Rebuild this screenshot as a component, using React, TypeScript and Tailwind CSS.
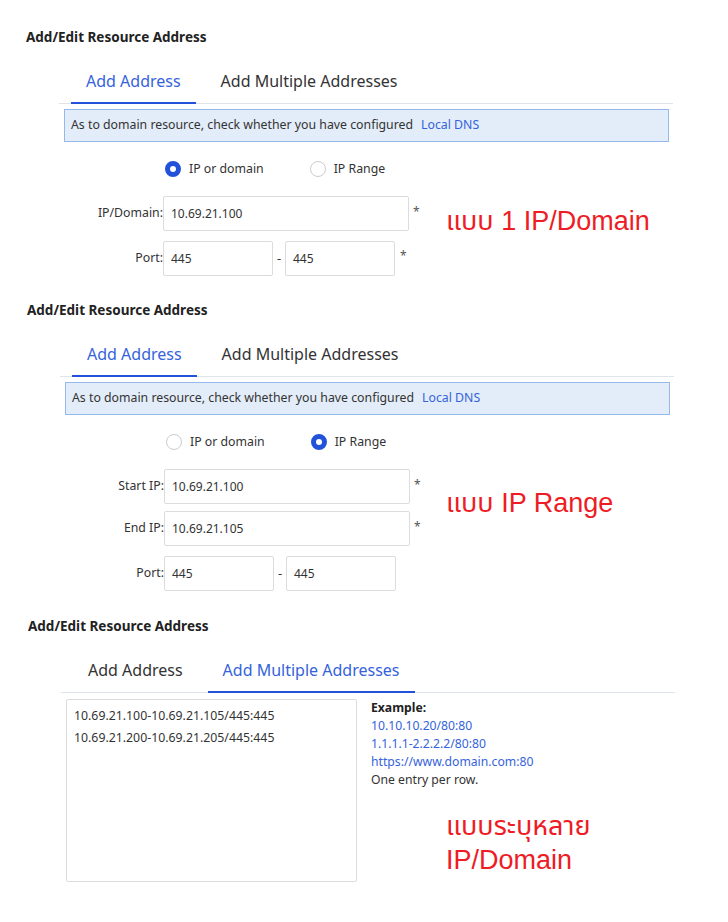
import React from "react";

const blue = "text-[#3563dc]";

function Title() {
  return (
    <div className="h-[20px] leading-[20px] text-[13.5px] font-bold text-[#222]">
      Add/Edit Resource Address
    </div>
  );
}

function Tabs({ active }: { active: number }) {
  const tabs = ["Add Address", "Add Multiple Addresses"];
  return (
    <div className="mt-[22px] ml-[59px] w-[614px] flex gap-[10px] pl-[12px] border-b border-[#dfe3ea]">
      {tabs.map((t, i) => (
        <div
          key={t}
          className={
            i === active
              ? "px-[15px] pb-[9px] text-[16px] leading-[24px] text-[#3563dc] border-b-2 border-[#2152d9] -mb-px"
              : "px-[15px] pb-[9px] text-[16px] leading-[24px] text-[#333] border-b-2 border-transparent -mb-px"
          }
        >
          {t}
        </div>
      ))}
    </div>
  );
}

function Notice() {
  return (
    <div className="mt-[5px] ml-[64px] w-[605px] h-[33px] flex items-center px-[6px] bg-[#e3edf9] border border-[#97b9e9] text-[12.3px] text-[#333]">
      As to domain resource, check whether you have configured
      <span className={`ml-[8px] ${blue}`}>Local DNS</span>
    </div>
  );
}

function Radio({ checked, label }: { checked: boolean; label: string }) {
  return (
    <div className="flex items-center gap-[8px]">
      <span
        className={
          checked
            ? "w-[16px] h-[16px] rounded-full border-[5px] border-[#2152d9] bg-white"
            : "w-[16px] h-[16px] rounded-full border border-[#c9ccd1] bg-white"
        }
      />
      <span className="text-[12.3px] text-[#333]">{label}</span>
    </div>
  );
}

function Field({ label, value }: { label: string; value: string }) {
  return (
    <div className="flex items-center">
      <div className="w-[163px] text-right text-[12.3px] text-[#333]">{label}</div>
      <div className="w-[246px] h-[35px] flex items-center px-[7px] border border-[#dcdcdc] rounded-[2px] text-[12px] text-[#333]">
        {value}
      </div>
      <span className="ml-[4px] -mt-[4px] text-[12px] text-[#555]">*</span>
    </div>
  );
}

function PortRow({ star }: { star: boolean }) {
  return (
    <div className="flex items-center">
      <div className="w-[163px] text-right text-[12.3px] text-[#333]">Port:</div>
      <div className="w-[110px] h-[35px] flex items-center px-[7px] border border-[#dcdcdc] rounded-[2px] text-[12px] text-[#333]">
        445
      </div>
      <span className="w-[12px] text-center text-[13px] text-[#333]">-</span>
      <div className="w-[110px] h-[35px] flex items-center px-[7px] border border-[#dcdcdc] rounded-[2px] text-[12px] text-[#333]">
        445
      </div>
      {star && <span className="ml-[5px] -mt-[6px] text-[12px] text-[#555]">*</span>}
    </div>
  );
}

function Note({ children }: { children: React.ReactNode }) {
  return (
    <div
      className="text-[27px] leading-[34px] text-[#ee1c25]"
      style={{ fontFamily: '"Liberation Sans", "Noto Sans Thai", "DejaVu Sans", sans-serif' }}
    >
      {children}
    </div>
  );
}

export default function App() {
  return (
    <div className="w-[728px] h-[922px] bg-white text-[#333]" style={{ fontFamily: '"Noto Sans", "Open Sans", sans-serif' }}>
      {/* single address */}
      <div className="pl-0">
        <div className="pt-[27px] pl-[26px]">
          <Title />
        </div>
        <Tabs active={0} />
        <Notice />
        <div className="flex">
          <div className="w-[446px] shrink-0">
            <div className="mt-[17px] ml-[165px] h-[20px] flex items-center gap-[46px]">
              <Radio checked label="IP or domain" />
              <Radio checked={false} label="IP Range" />
            </div>
            <div className="mt-[17px] flex flex-col gap-[10px]">
              <Field label="IP/Domain:" value="10.69.21.100" />
              <PortRow star />
            </div>
          </div>
          <div className="mt-[62px]">
            <Note>แบบ 1 IP/Domain</Note>
          </div>
        </div>
      </div>

      {/* ip range */}
      <div className="pl-px">
        <div className="mt-[24px] pl-[26px]">
          <Title />
        </div>
        <Tabs active={0} />
        <Notice />
        <div className="flex">
          <div className="w-[445px] shrink-0">
            <div className="mt-[17px] ml-[165px] h-[20px] flex items-center gap-[46px]">
              <Radio checked={false} label="IP or domain" />
              <Radio checked label="IP Range" />
            </div>
            <div className="mt-[17px] flex flex-col">
              <Field label="Start IP:" value="10.69.21.100" />
              <div className="mt-[7px]">
                <Field label="End IP:" value="10.69.21.105" />
              </div>
              <div className="mt-[10px]">
                <PortRow star={false} />
              </div>
            </div>
          </div>
          <div className="mt-[71px]">
            <Note>แบบ IP Range</Note>
          </div>
        </div>
      </div>

      {/* multiple */}
      <div className="pl-[2px]">
        <div className="mt-[25px] pl-[26px]">
          <Title />
        </div>
        <Tabs active={1} />
        <div className="flex mt-[6px] ml-[64px]">
          <div className="w-[291px] h-[183px] shrink-0 border border-[#dcdcdc] rounded-[2px] px-[7px] pt-[5px] text-[12.3px] leading-[22px] text-[#333]">
            <div>10.69.21.100-10.69.21.105/445:445</div>
            <div>10.69.21.200-10.69.21.205/445:445</div>
          </div>
          <div className="ml-[14px]">
            <div className="text-[12.2px] leading-[18px]">
              <div className="font-bold text-[#222]">Example:</div>
              <div className={blue}>10.10.10.20/80:80</div>
              <div className={blue}>1.1.1.1-2.2.2.2/80:80</div>
              <div className={blue}>https://www.domain.com:80</div>
              <div className="text-[#333]">One entry per row.</div>
            </div>
            <div className="mt-[20px] ml-[75px]">
              <Note>
                แบบระบุหลาย
                <br />
                IP/Domain
              </Note>
            </div>
          </div>
        </div>
      </div>
    </div>
  );
}
